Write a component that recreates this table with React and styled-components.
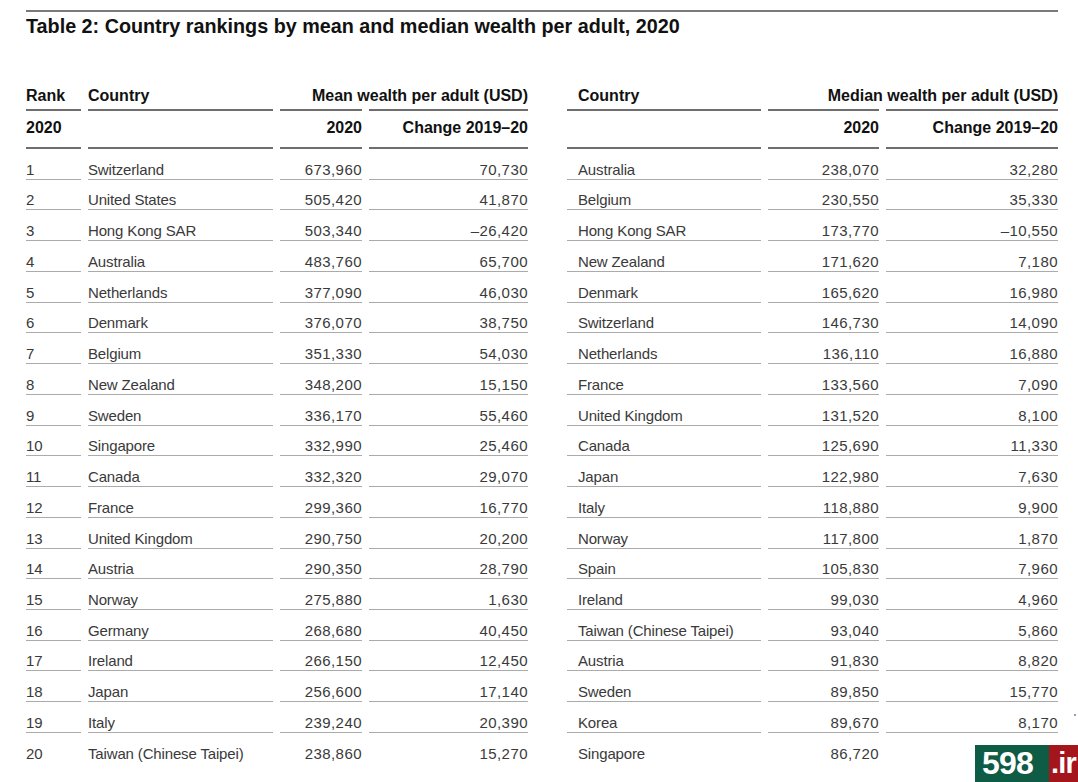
import React from "react";
import styled, { createGlobalStyle } from "styled-components";

const Global = createGlobalStyle`
  html, body { margin: 0; padding: 0; background: #fff; overflow: hidden; }
  body { font-family: "Liberation Sans", Arial, Helvetica, sans-serif; color: #222; }
`;

const Page = styled.div`
  position: relative;
  width: 1078px;
  height: 782px;
  box-sizing: border-box;
  padding: 10px 20px 0 26px;
  overflow: hidden;
`;

const TopRule = styled.div`
  height: 2px;
  background: #7a7a7a;
`;

const Title = styled.h1`
  margin: 3px 0 0;
  font-size: 19.75px;
  line-height: 22px;
  font-weight: 700;
  color: #111;
`;

const Tables = styled.div`
  display: flex;
  gap: 39px;
  margin-top: 50px;
`;

const Grid = styled.div`
  display: grid;
  grid-template-columns: ${(p) => p.$cols};
  column-gap: 7px;
  align-items: stretch;
`;

const HeadCell = styled.div`
  font-size: 16px;
  font-weight: 700;
  line-height: 18px;
  color: #111;
  padding: ${(p) => (p.$second ? "8px 0 10px" : "0 0 4px")};
  padding-left: ${(p) => p.$indent || 0}px;
  border-bottom: 2px solid #6e6e6e;
  text-align: ${(p) => (p.$right ? "right" : "left")};
  white-space: nowrap;
`;

const HeadGroup = styled.div`
  grid-column: span 2;
  display: grid;
  grid-template-columns: subgrid;
  grid-template-rows: auto 2px;
`;

const GroupLabel = styled.div`
  grid-column: 1 / -1;
  font-size: 16px;
  font-weight: 700;
  line-height: 18px;
  color: #111;
  padding-bottom: 4px;
  text-align: right;
  white-space: nowrap;
`;

const GroupRule = styled.div`
  background: #6e6e6e;
`;

const Cell = styled.div`
  box-sizing: border-box;
  height: 30.74px;
  display: flex;
  align-items: flex-end;
  justify-content: ${(p) => (p.$right ? "flex-end" : "flex-start")};
  padding-left: ${(p) => p.$indent || 0}px;
  font-size: 15px;
  line-height: 18px;
  color: #3a3a3a;
  letter-spacing: ${(p) => (p.$num ? "0.45px" : "-0.15px")};
  border-bottom: ${(p) => (p.$last ? "1px solid transparent" : "1px solid #ababab")};
  white-space: nowrap;
`;

const Logo = styled.div`
  position: absolute;
  right: 0;
  bottom: 0;
  display: flex;
  height: 37px;
  font-family: "Liberation Sans", Arial, sans-serif;
  font-weight: 700;
  line-height: 37px;
  color: #fff;
`;

const LogoPart = styled.span`
  display: block;
  box-sizing: border-box;
  width: ${(p) => p.$w}px;
  background: ${(p) => p.$bg};
  padding-left: ${(p) => p.$pad}px;
  font-size: ${(p) => p.$size}px;
  letter-spacing: -0.8px;
  white-space: nowrap;
`;

const Speck = styled.span`
  position: absolute;
  right: 2px;
  top: 714px;
  width: 2px;
  height: 2px;
  border-radius: 1px;
  background: #6a7fb0;
`;

const meanRows = [
  ["1", "Switzerland", "673,960", "70,730"],
  ["2", "United States", "505,420", "41,870"],
  ["3", "Hong Kong SAR", "503,340", "–26,420"],
  ["4", "Australia", "483,760", "65,700"],
  ["5", "Netherlands", "377,090", "46,030"],
  ["6", "Denmark", "376,070", "38,750"],
  ["7", "Belgium", "351,330", "54,030"],
  ["8", "New Zealand", "348,200", "15,150"],
  ["9", "Sweden", "336,170", "55,460"],
  ["10", "Singapore", "332,990", "25,460"],
  ["11", "Canada", "332,320", "29,070"],
  ["12", "France", "299,360", "16,770"],
  ["13", "United Kingdom", "290,750", "20,200"],
  ["14", "Austria", "290,350", "28,790"],
  ["15", "Norway", "275,880", "1,630"],
  ["16", "Germany", "268,680", "40,450"],
  ["17", "Ireland", "266,150", "12,450"],
  ["18", "Japan", "256,600", "17,140"],
  ["19", "Italy", "239,240", "20,390"],
  ["20", "Taiwan (Chinese Taipei)", "238,860", "15,270"],
];

const medianRows = [
  ["Australia", "238,070", "32,280"],
  ["Belgium", "230,550", "35,330"],
  ["Hong Kong SAR", "173,770", "–10,550"],
  ["New Zealand", "171,620", "7,180"],
  ["Denmark", "165,620", "16,980"],
  ["Switzerland", "146,730", "14,090"],
  ["Netherlands", "136,110", "16,880"],
  ["France", "133,560", "7,090"],
  ["United Kingdom", "131,520", "8,100"],
  ["Canada", "125,690", "11,330"],
  ["Japan", "122,980", "7,630"],
  ["Italy", "118,880", "9,900"],
  ["Norway", "117,800", "1,870"],
  ["Spain", "105,830", "7,960"],
  ["Ireland", "99,030", "4,960"],
  ["Taiwan (Chinese Taipei)", "93,040", "5,860"],
  ["Austria", "91,830", "8,820"],
  ["Sweden", "89,850", "15,770"],
  ["Korea", "89,670", "8,170"],
  ["Singapore", "86,720", ""],
];

function MeanTable() {
  return (
    <Grid $cols="55px 185px 82px 159px">
      <HeadCell>Rank</HeadCell>
      <HeadCell>Country</HeadCell>
      <HeadGroup>
        <GroupLabel>Mean wealth per adult (USD)</GroupLabel>
        <GroupRule />
        <GroupRule />
      </HeadGroup>
      <HeadCell $second>2020</HeadCell>
      <HeadCell $second />
      <HeadCell $second $right>2020</HeadCell>
      <HeadCell $second $right>Change 2019–20</HeadCell>
      {meanRows.map((r, i) => {
        const last = i === meanRows.length - 1;
        return (
          <React.Fragment key={r[0]}>
            <Cell $last={last}>{r[0]}</Cell>
            <Cell $last={last}>{r[1]}</Cell>
            <Cell $last={last} $right $num>{r[2]}</Cell>
            <Cell $last={last} $right $num>{r[3]}</Cell>
          </React.Fragment>
        );
      })}
    </Grid>
  );
}

function MedianTable() {
  return (
    <Grid $cols="194px 111px 172px">
      <HeadCell $indent={11}>Country</HeadCell>
      <HeadGroup>
        <GroupLabel>Median wealth per adult (USD)</GroupLabel>
        <GroupRule />
        <GroupRule />
      </HeadGroup>
      <HeadCell $second />
      <HeadCell $second $right>2020</HeadCell>
      <HeadCell $second $right>Change 2019–20</HeadCell>
      {medianRows.map((r, i) => {
        const last = i === medianRows.length - 1;
        return (
          <React.Fragment key={r[0]}>
            <Cell $last={last} $indent={11}>{r[0]}</Cell>
            <Cell $last={last} $right $num>{r[1]}</Cell>
            <Cell $last={last} $right $num>{r[2]}</Cell>
          </React.Fragment>
        );
      })}
    </Grid>
  );
}

export default function App() {
  return (
    <>
      <Global />
      <Page>
        <TopRule />
        <Title>Table 2: Country rankings by mean and median wealth per adult, 2020</Title>
        <Tables>
          <MeanTable />
          <MedianTable />
        </Tables>
        <Speck />
        <Logo>
          <LogoPart $bg="#0e5b46" $w={74} $pad={7} $size={32}>598</LogoPart>
          <LogoPart $bg="#a5161c" $w={29} $pad={2} $size={29}>.ir</LogoPart>
        </Logo>
      </Page>
    </>
  );
}
